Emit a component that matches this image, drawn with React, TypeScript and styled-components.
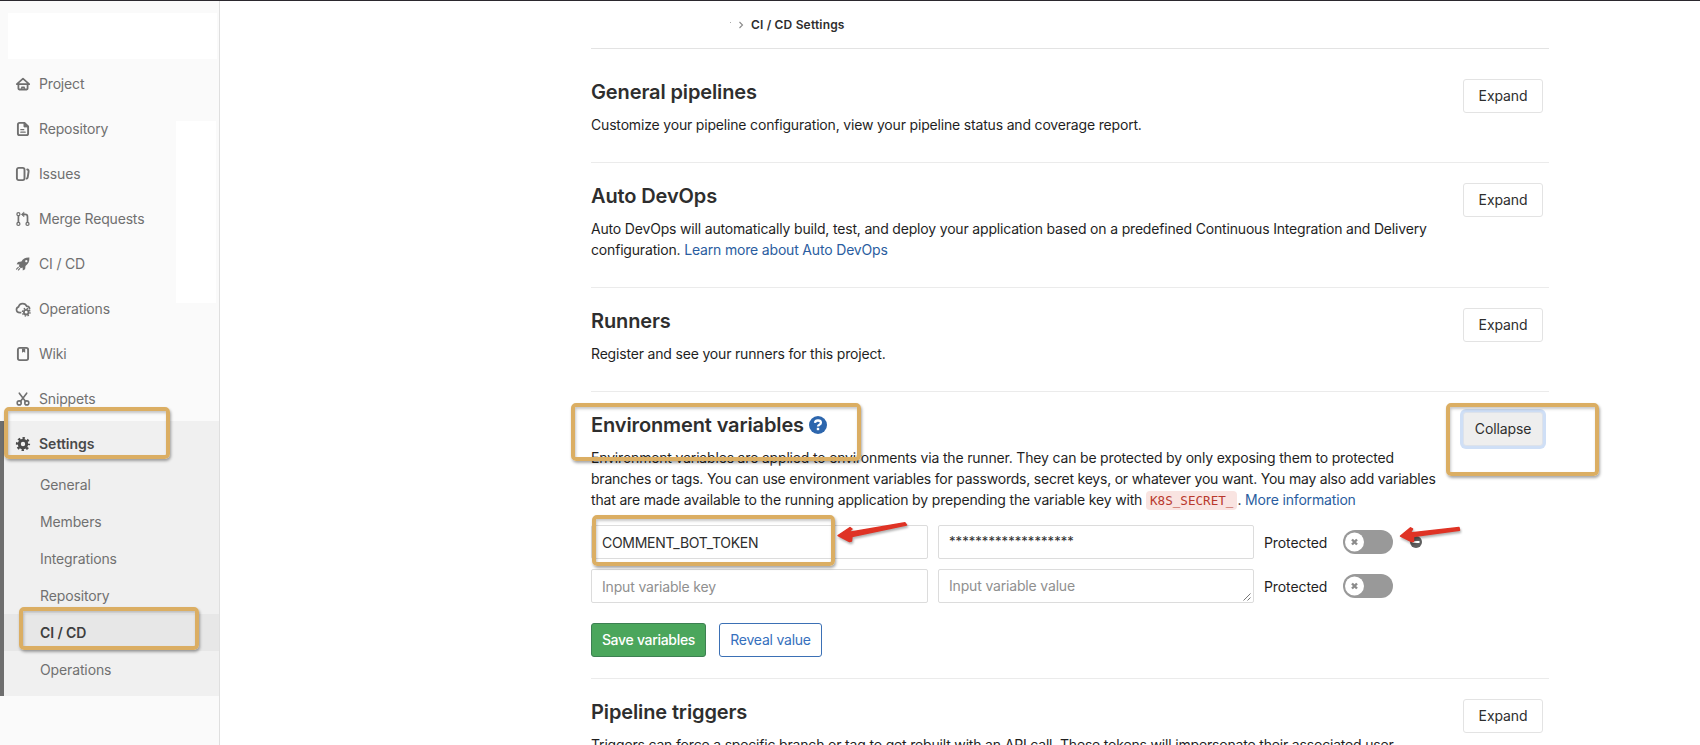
import React from 'react';
import styled, { createGlobalStyle, css } from 'styled-components';

const GlobalStyle = createGlobalStyle`
  *, *::before, *::after { box-sizing: border-box; }
  html, body { margin: 0; padding: 0; overflow: hidden; }
  body {
    background: #fff;
    color: #2e2e2e;
    font-family: Inter, "Liberation Sans", sans-serif;
    font-size: 14px;
    line-height: 21px;
  }
`;

const Page = styled.div`
  position: relative;
  display: flex;
  width: 1700px;
  height: 745px;
  overflow: hidden;
  border-top: 1px solid #2b282e;
`;

const Sidebar = styled.nav`
  width: 220px;
  flex: none;
  padding-top: 60px;
  background: #fafafa;
  border-right: 1px solid #dfdfdf;
  color: #707070;
`;

const NavItem = styled.a<{ $active?: boolean }>`
  display: flex;
  align-items: center;
  gap: 8px;
  height: 45px;
  padding-left: ${(p) => (p.$active ? 11 : 15)}px;
  letter-spacing: -0.17px;
  ${(p) => p.$active && css`color: #4a4a4a; font-weight: 600; letter-spacing: 0;`}
  svg { flex: none; }
`;

const ActiveGroup = styled.div`
  padding-bottom: 8px;
  border-left: 4px solid #6e6e6e;
  background: #f0f0f0;
`;

const SubItem = styled.a<{ $active?: boolean }>`
  display: flex;
  align-items: center;
  height: 37px;
  padding-left: 36px;
  letter-spacing: -0.13px;
  ${(p) => p.$active && css`background: #e7e7e7; color: #3e3e3e; font-weight: 600; letter-spacing: -0.1px;`}
`;

const Blank = styled.div<{ $x: number; $y: number; $w: number; $h: number }>`
  position: absolute;
  left: ${(p) => p.$x}px;
  top: ${(p) => p.$y}px;
  width: ${(p) => p.$w}px;
  height: ${(p) => p.$h}px;
  background: #fff;
`;

const Main = styled.main`
  width: 958px;
  margin-left: 371px;
  flex: none;
`;

const Breadcrumbs = styled.div`
  display: flex;
  align-items: center;
  height: 48px;
  padding-left: 139px;
  border-bottom: 1px solid #e3e3e3;
  margin-bottom: 10px;
  font-size: 12px;
  font-weight: 600;
  letter-spacing: 0.17px;
  svg { margin-right: 6px; }
`;

const Section = styled.section`
  display: flex;
  justify-content: space-between;
  align-items: flex-start;
  padding: 20px 6px 27px 0;
  border-bottom: 1px solid #ebebeb;
`;

const FormSection = styled(Section)`
  flex-wrap: wrap;
  padding-bottom: 21px;
`;

const Title = styled.h4`
  display: flex;
  align-items: center;
  gap: 5px;
  height: 24px;
  margin: 1px 0 10px;
  font-size: 20px;
  line-height: 24px;
  font-weight: 600;
  letter-spacing: -0.12px;
`;

const Description = styled.p`
  margin: 0;
  color: #1f1f1f;
  white-space: nowrap;
`;

const Line = styled.span<{ $ls?: number }>`
  display: block;
  height: 21px;
  letter-spacing: ${(p) => p.$ls ?? -0.177}px;
`;

const Link = styled.a`
  color: #2a5da0;
`;

const Code = styled.code`
  padding: 2px 4px;
  border-radius: 4px;
  background: #f9e4e1;
  color: #b8382c;
  font-family: "DejaVu Sans Mono", monospace;
  font-size: 12.6px;
  line-height: 15px;
  letter-spacing: 0;
`;

const Button = styled.button<{ $kind?: 'pressed' | 'success' | 'outline'; $w: number }>`
  width: ${(p) => p.$w}px;
  height: 34px;
  padding: 0 0 1px;
  flex: none;
  border: 1px solid #e3e3e3;
  border-radius: 3px;
  background: #fff;
  color: #2e2e2e;
  font: inherit;
  letter-spacing: -0.12px;
  white-space: nowrap;
  ${(p) => p.$kind === 'pressed' && css`
    background: #eee;
    border-color: #dde2ea;
    box-shadow: 0 0 0 3px #cfdff6;
  `}
  ${(p) => p.$kind === 'success' && css`
    background: #4ba65c;
    border-color: #3d8052;
    color: #fff;
    font-weight: 500;
    letter-spacing: -0.3px;
  `}
  ${(p) => p.$kind === 'outline' && css`
    border-color: #3b70b5;
    color: #3670bd;
    letter-spacing: -0.22px;
  `}
`;

const Form = styled.div`
  width: 100%;
  display: flex;
  flex-direction: column;
  gap: 10px;
  margin-top: 15px;
`;

const VariableRow = styled.div`
  display: flex;
  align-items: center;
  height: 34px;
`;

const Field = styled.div<{ $w: number; $placeholder?: boolean; $raise?: boolean }>`
  position: relative;
  width: ${(p) => p.$w}px;
  height: 34px;
  margin-right: 10px;
  padding: ${(p) => (p.$raise ? 5 : 6)}px 10px;
  border: 1px solid #dcdcdc;
  border-radius: 2px;
  color: ${(p) => (p.$placeholder ? '#8f8f8f' : '#2e2e2e')};
  letter-spacing: -0.17px;
  white-space: nowrap;
`;

const KeyText = styled.span`
  letter-spacing: -0.3px;
`;

const Masked = styled.span`
  display: block;
  font-size: 13px;
  letter-spacing: 0.06px;
`;

const Grip = styled.svg`
  position: absolute;
  right: 2px;
  bottom: 1px;
`;

const ProtectedLabel = styled.span`
  width: 79px;
  color: #1f1f1f;
  letter-spacing: -0.1px;
`;

const Toggle = styled.span`
  display: flex;
  align-items: center;
  width: 50px;
  height: 24px;
  padding-left: 2px;
  border-radius: 12px;
  background: #999;
`;

const RemoveIcon = styled.svg`
  margin-left: 17px;
`;

const Actions = styled.div`
  display: flex;
  gap: 13px;
  margin-top: 10px;
`;

const Highlight = styled.div<{ $x: number; $y: number; $w: number; $h: number }>`
  position: absolute;
  left: ${(p) => p.$x}px;
  top: ${(p) => p.$y - 1}px;
  width: ${(p) => p.$w}px;
  height: ${(p) => p.$h}px;
  border: 4.5px solid #dbae63;
  border-radius: 5px;
  box-shadow: 1px 2px 3px rgba(0, 0, 0, 0.35), inset 1px 2px 3px rgba(0, 0, 0, 0.22);
`;

const Arrows = styled.svg`
  position: absolute;
  left: 0;
  top: -1px;
  pointer-events: none;
  filter: drop-shadow(1px 2px 1px rgba(0, 0, 0, 0.3));
`;

const Icon = ({ children }: { children: React.ReactNode }) => (
  <svg width="16" height="16" viewBox="0 0 16 16" fill="none" stroke="currentColor" strokeWidth="1.8" strokeLinejoin="round" strokeLinecap="round">
    {children}
  </svg>
);

const HomeIcon = () => (
  <Icon>
    <path d="M1.8 8.2h12.4L8 2.7z" strokeWidth="1.7" />
    <path d="M3.4 9v3.6q0 .9.9.9h7.4q.9 0 .9-.9V9" />
    <path d="M6.8 13v-1.7h2.4V13" strokeWidth="1.4" />
  </Icon>
);

const DocIcon = () => (
  <Icon>
    <path d="M9.5 1.9H4.6Q2.9 1.9 2.9 3.6v8.8q0 1.7 1.7 1.7h6.8q1.7 0 1.7-1.7V5.5z" strokeWidth="1.9" />
    <path d="M9 1.5v4.4h4.6z" fill="currentColor" strokeWidth="1" />
    <path d="M5.8 8.7h3M5.8 11.2h4.4" strokeWidth="1.2" />
  </Icon>
);

const IssuesIcon = () => (
  <Icon>
    <rect x="1.9" y="1.9" width="7.6" height="12.2" rx="1.8" strokeWidth="1.9" />
    <path d="M12.2 3.5q1.6.3 1.4 2l-.9 5.8q-.2 1-1 1.3" strokeWidth="1.9" />
  </Icon>
);

const MergeIcon = () => (
  <Icon>
    <circle cx="3.4" cy="3.2" r="1.5" strokeWidth="1.3" />
    <circle cx="3.4" cy="12.9" r="1.5" strokeWidth="1.3" />
    <circle cx="12.5" cy="12.9" r="1.5" strokeWidth="1.3" />
    <path d="M3.4 5v6.2M12.5 11.2V5.7q0-2.3-2.3-2.3H7.6" strokeWidth="1.7" />
    <path d="M8.7 1.2L6.4 3.4l2.3 2.2z" fill="currentColor" strokeWidth=".6" />
  </Icon>
);

const RocketIcon = () => (
  <Icon>
    <path fillRule="evenodd" d="M14.4 1.6c-4-.2-6.500 1.300-8 4L3 6.100 1.600 8.300l2.900.300-.7 1.700 2 2 1.800-.7.200 3 2.300-1.400.4-3.300c2.800-1.700 4.100-4.300 3.900-8.300zM11.300 4a1.150 1.150 0 1 0 .01 0z" fill="currentColor" stroke="none" />
    <path d="M3.300 11.300l-1.800 1.800M4.700 12.700l-1.300 1.300" strokeWidth="1.100" />
  </Icon>
);

const CloudGearIcon = () => (
  <Icon>
    <path d="M5.600 11.700H5C2.900 11.700 1.500 10.400 1.500 8.600 1.500 7.200 2.400 6.200 3.600 5.900 4 3.800 5.600 2.600 7.700 2.600c2 0 3.300 1 3.900 2.500 1.800.1 2.900 1.200 3 2.500" strokeWidth="1.700" />
    <circle cx="11.200" cy="11.200" r="2.300" strokeWidth="1.800" />
    <circle cx="11.200" cy="11.200" r="3.800" strokeWidth="1.400" strokeDasharray="1.490 1.490" strokeLinecap="butt" />
  </Icon>
);

const BookIcon = () => (
  <Icon>
    <rect x="2.900" y="1.900" width="10.200" height="12.200" rx="1.800" strokeWidth="1.900" />
    <path d="M7 2.500h3.200v4.300L8.600 5.700 7 6.800z" fill="currentColor" stroke="none" />
  </Icon>
);

const ScissorsIcon = () => (
  <Icon>
    <circle cx="4.200" cy="11.900" r="2" strokeWidth="1.600" />
    <circle cx="11.800" cy="11.900" r="2" strokeWidth="1.600" />
    <path d="M4.300 2.200l6.300 8.300M11.700 2.200l-6.300 8.300" strokeWidth="1.600" />
  </Icon>
);

const GearIcon = () => (
  <Icon>
    <circle cx="8" cy="8" r="3.700" strokeWidth="3" />
    <circle cx="8" cy="8" r="5.900" strokeWidth="2.400" strokeDasharray="2.317 2.317" strokeDashoffset="1.160" strokeLinecap="butt" />
  </Icon>
);

const HelpIcon = () => (
  <svg width="18" height="18" viewBox="0 0 18 18" fill="none">
    <circle cx="9" cy="9" r="9" fill="#2d66ad" />
    <path d="M6 6.900Q6.200 4.500 9 4.500q2.900 0 2.900 2.200 0 1.300-1.500 2Q9 9.400 9 10.600" stroke="#fff" strokeWidth="2.300" />
    <rect x="7.800" y="11.800" width="2.400" height="2.400" fill="#fff" />
  </svg>
);

const ProtectedToggle = () => (
  <>
    <ProtectedLabel>Protected</ProtectedLabel>
    <Toggle>
      <svg width="19" height="20" viewBox="0 0 19 20">
        <circle cx="9.500" cy="10" r="9.500" fill="#fff" />
        <path d="M7 7.500l5 5M12 7.500l-5 5" stroke="#8c8c8c" strokeWidth="2.400" />
      </svg>
    </Toggle>
  </>
);

const navItems: [string, React.FC][] = [
  ['Project', HomeIcon],
  ['Repository', DocIcon],
  ['Issues', IssuesIcon],
  ['Merge Requests', MergeIcon],
  ['CI / CD', RocketIcon],
  ['Operations', CloudGearIcon],
  ['Wiki', BookIcon],
  ['Snippets', ScissorsIcon],
];

const subItems = ['General', 'Members', 'Integrations', 'Repository', 'CI / CD', 'Operations'];

const Block = ({ title, children }: { title: string; children: React.ReactNode }) => (
  <Section>
    <div>
      <Title>{title}</Title>
      <Description>{children}</Description>
    </div>
    <Button $w={80}>Expand</Button>
  </Section>
);

export default function App() {
  return (
    <>
      <GlobalStyle />
      <Page>
        <Sidebar>
          {navItems.map(([label, Glyph]) => (
            <NavItem key={label}><Glyph />{label}</NavItem>
          ))}
          <ActiveGroup>
            <NavItem $active><GearIcon />Settings</NavItem>
            {subItems.map((label) => (
              <SubItem key={label} $active={label === 'CI / CD'}>{label}</SubItem>
            ))}
          </ActiveGroup>
        </Sidebar>

        <Main>
          <Breadcrumbs>
            <svg width="15" height="8" viewBox="0 0 15 8" fill="none">
              <rect x="0" y="1" width="1" height="1" fill="#aaa" />
              <path d="M9.500 1l3 3-3 3" stroke="#8a8a8a" strokeWidth="1.100" />
            </svg>
            CI / CD Settings
          </Breadcrumbs>

          <Block title="General pipelines">
            <Line>Customize your pipeline configuration, view your pipeline status and coverage report.</Line>
          </Block>
          <Block title="Auto DevOps">
            <Line>Auto DevOps will automatically build, test, and deploy your application based on a predefined Continuous Integration and Delivery</Line>
            <Line>configuration. <Link>Learn more about Auto DevOps</Link></Line>
          </Block>
          <Block title="Runners">
            <Line>Register and see your runners for this project.</Line>
          </Block>

          <FormSection>
            <div>
              <Title>Environment variables <HelpIcon /></Title>
              <Description>
                <Line>Environment variables are applied to environments via the runner. They can be protected by only exposing them to protected</Line>
                <Line $ls={-0.218}>branches or tags. You can use environment variables for passwords, secret keys, or whatever you want. You may also add variables</Line>
                <Line $ls={-0.163}>that are made available to the running application by prepending the variable key with <Code>K8S_SECRET_</Code>. <Link>More information</Link></Line>
              </Description>
            </div>
            <Button $w={80} $kind="pressed">Collapse</Button>
            <Form>
              <VariableRow>
                <Field $w={337}><KeyText>COMMENT_BOT_TOKEN</KeyText></Field>
                <Field $w={316} $raise><Masked>*******************</Masked></Field>
                <ProtectedToggle />
                <RemoveIcon width="12" height="12" viewBox="0 0 12 12">
                  <circle cx="6" cy="6" r="6" fill="#5f5f5f" />
                  <rect x="2.500" y="5" width="7" height="2" fill="#fff" />
                </RemoveIcon>
              </VariableRow>
              <VariableRow>
                <Field $w={337} $placeholder>Input variable key</Field>
                <Field $w={316} $placeholder $raise>
                  Input variable value
                  <Grip width="8" height="8" viewBox="0 0 8 8"><path d="M.5 7.500l7-7M4.500 7.500l3-3" stroke="#777" /></Grip>
                </Field>
                <ProtectedToggle />
              </VariableRow>
              <Actions>
                <Button $w={115} $kind="success">Save variables</Button>
                <Button $w={103} $kind="outline">Reveal value</Button>
              </Actions>
            </Form>
          </FormSection>

          <Block title="Pipeline triggers">
            <Line>Triggers can force a specific branch or tag to get rebuilt with an API call. These tokens will impersonate their associated user</Line>
          </Block>
        </Main>

        <Blank $x={8} $y={12} $w={209} $h={46} />
        <Blank $x={176} $y={120} $w={40} $h={182} />

        <Highlight $x={4} $y={407} $w={166} $h={52} />
        <Highlight $x={19} $y={607} $w={180} $h={43} />
        <Highlight $x={571} $y={403} $w={290} $h={58} />
        <Highlight $x={592} $y={515} $w={243} $h={51} />
        <Highlight $x={1446} $y={403} $w={153} $h={73} />

        <Arrows width="1700" height="745" viewBox="0 0 1700 745" fill="#df3325" stroke="#df3325" strokeWidth="1.500" strokeLinejoin="round">
          <path d="M838 535.500L850 527.500L852 529L848 532.500L905 522.800L906.500 525L852 536.500L851.500 541L849.500 541.500z" />
          <path d="M1400.500 536L1410.500 527.800L1412.500 529L1410 533L1459 527.600L1459.500 530.200L1413.500 536.500L1413.500 541.500L1411.500 541.500z" />
        </Arrows>
      </Page>
    </>
  );
}
